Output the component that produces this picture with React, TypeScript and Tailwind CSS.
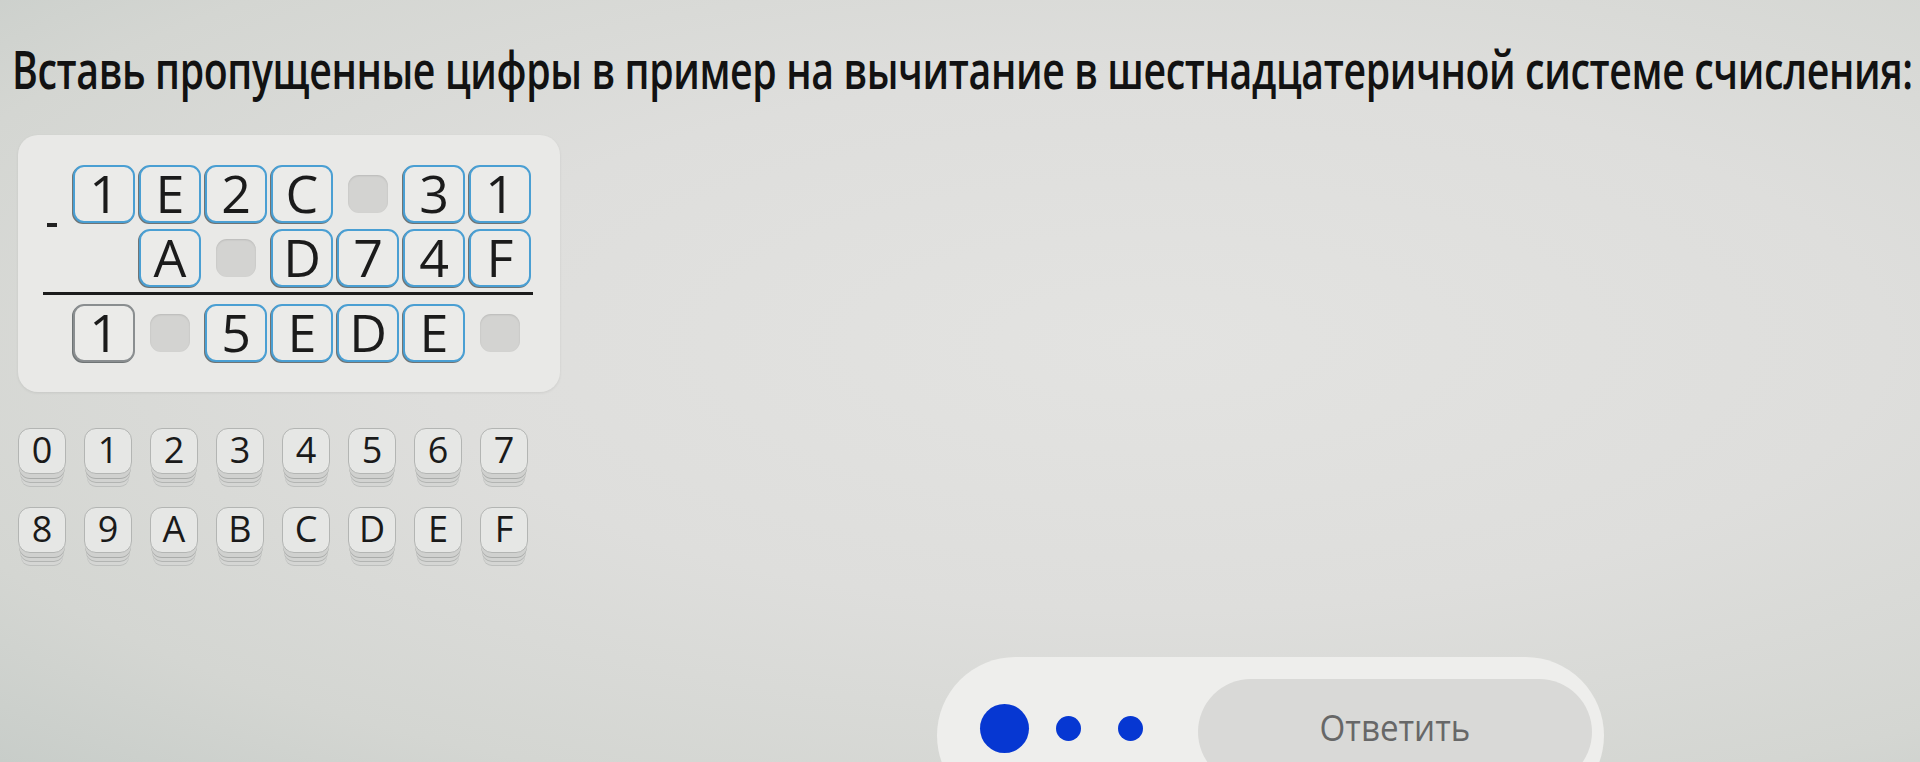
const top = ["1", "E", "2", "C", "", "3", "1"];
const sub = [null, "A", "", "D", "7", "4", "F"];
const res = ["1", "", "5", "E", "D", "E", ""];
const keys = [
    ["0", "1", "2", "3", "4", "5", "6", "7"],
    ["8", "9", "A", "B", "C", "D", "E", "F"],
];

// одна клетка примера: цифра в рамке или пустое место
function Cell({ value, grey }: { value: string | null; grey?: boolean }) {
    if (value === null) return <div className="w-[62px] h-[58px]" />;
    if (value === "")
        return (
            <div className="w-[62px] h-[58px] flex items-center justify-center">
                <div className="w-[40px] h-[38px] rounded-[11px] bg-[#d3d3d1] shadow-[inset_0_1px_2px_rgba(0,0,0,0.12)]" />
            </div>
        );
    return (
        <div
            className={`w-[62px] h-[58px] rounded-[11px] border-2 bg-[#ebebe9] flex items-center justify-center text-[52px] leading-none text-[#1b1b1b] shadow-[-1px_1px_0_#6f7475] ${
                grey ? "border-[#8a8e90]" : "border-[#4a9fd3]"
            }`}
        >
            <span className="-mt-[3px]">{value}</span>
        </div>
    );
}

function Row({ items, greyFirst }: { items: (string | null)[]; greyFirst?: boolean }) {
    return (
        <div className="flex gap-[4px]">
            {items.map((v, i) => (
                <Cell key={i} value={v} grey={greyFirst && i === 0} />
            ))}
        </div>
    );
}

export default function App() {
    return (
        <div
            className="relative w-full h-[762px] overflow-hidden flex flex-col bg-[radial-gradient(ellipse_at_60%_45%,#e3e3e1_0%,#dededc_45%,#d4d6d2_80%,#c8cdc9_100%)]"
            style={{ fontFamily: '"Open Sans", "Noto Sans", sans-serif' }}
        >
            {/* Заголовок задания */}
            <div className="pt-[39px] pl-[12px] h-[100px]">
                <h1 className="text-[52px] leading-[60px] font-semibold text-[#121212] whitespace-nowrap origin-left scale-x-[0.755] tracking-[-0.5px]">
                    Вставь пропущенные цифры в пример на вычитание в шестнадцатеричной системе счисления:
                </h1>
            </div>

            {/* Пример на вычитание */}
            <div className="ml-[18px] mt-[35px] w-[542px] rounded-[20px] bg-[#e9e9e7] pt-[30px] pb-[30px] pl-[25px] shadow-[0_1px_3px_rgba(0,0,0,0.08)]">
                <div className="flex">
                    <div className="w-[30px] flex items-center">
                        <div className="ml-[4px] -mt-[3px] w-[10px] h-[4px] bg-[#222]" />
                    </div>
                    <div className="flex flex-col gap-[6px]">
                        <Row items={top} />
                        <Row items={sub} />
                    </div>
                </div>
                <div className="mt-[5px] w-[490px] h-[3px] bg-[#1c1c1c]" />
                <div className="mt-[9px] ml-[30px]">
                    <Row items={res} greyFirst />
                </div>
            </div>

            {/* Клавиши */}
            <div className="ml-[18px] mt-[36px] flex flex-col gap-[33px]">
                {keys.map((row, r) => (
                    <div key={r} className="flex gap-[18px]">
                        {row.map((k) => (
                            <div
                                key={k}
                                className="w-[48px] h-[46px] rounded-[12px] bg-[#e6e7e5] border border-[#b3b5b3] flex items-center justify-center text-[36px] leading-none text-[#1a1a1a] shadow-[0_5px_0_-1px_#d0d1cf,0_6px_0_-1px_#a9aba9,0_10px_0_-2px_#d2d3d1,0_11px_0_-2px_#b2b4b2,0_15px_0_-3px_#d5d6d4,0_16px_0_-3px_#bdbfbd]"
                            >
                                <span className="-mt-[3px]">{k}</span>
                            </div>
                        ))}
                    </div>
                ))}
            </div>

            {/* Нижняя панель */}
            <div className="mt-auto ml-[937px] mb-[-52px] w-[667px] h-[157px] shrink-0 rounded-[80px] bg-[#eeeeec] flex items-start pt-[22px] pl-[43px] pr-[12px]">
                <div className="flex items-center h-[98px]">
                    <div className="w-[49px] h-[49px] rounded-full bg-[#0637d2]" />
                    <div className="ml-[27px] w-[25px] h-[25px] rounded-full bg-[#0637d2]" />
                    <div className="ml-[37px] w-[25px] h-[25px] rounded-full bg-[#0637d2]" />
                </div>
                <div className="ml-[55px] flex-1 h-[106px] rounded-full bg-[#d9d9d7] flex items-start justify-center pt-[29px]">
                    <span className="text-[36px] leading-[40px] text-[#676767] scale-x-[0.92]">Ответить</span>
                </div>
            </div>
        </div>
    );
}
